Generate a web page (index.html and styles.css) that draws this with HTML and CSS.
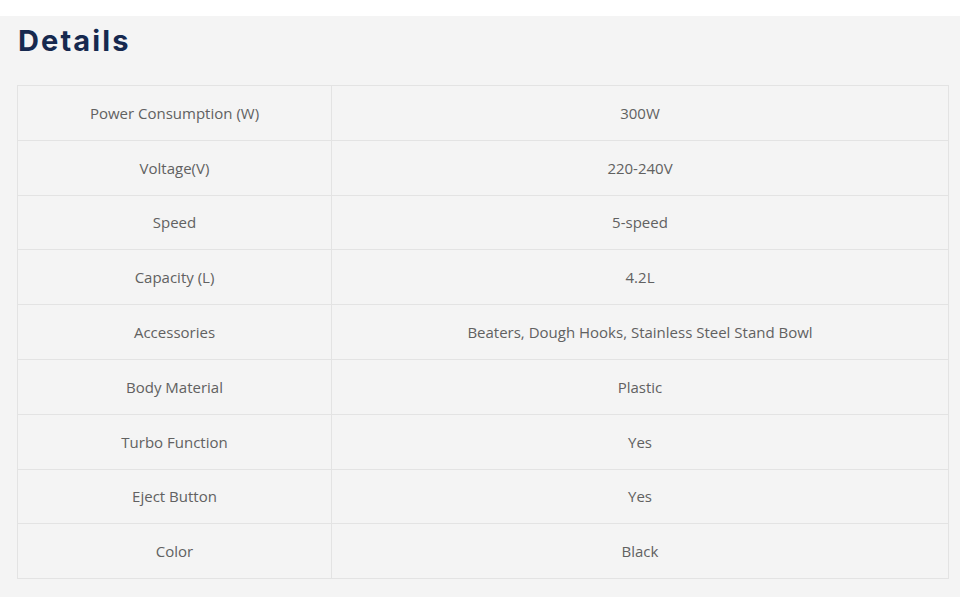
FILE: index.html
```html
<!DOCTYPE html>
<html>
<head>
<meta charset="utf-8">
<link rel="stylesheet" href="styles.css">
</head>
<body>
<div class="top"></div>
<section class="panel">
  <h2 class="title">Details</h2>
  <table class="specs">
    <tr><td>Power Consumption (W)</td><td>300W</td></tr>
    <tr><td>Voltage(V)</td><td>220-240V</td></tr>
    <tr><td>Speed</td><td>5-speed</td></tr>
    <tr><td>Capacity (L)</td><td>4.2L</td></tr>
    <tr><td>Accessories</td><td>Beaters, Dough Hooks, Stainless Steel Stand Bowl</td></tr>
    <tr><td>Body Material</td><td>Plastic</td></tr>
    <tr><td>Turbo Function</td><td>Yes</td></tr>
    <tr><td>Eject Button</td><td>Yes</td></tr>
    <tr><td>Color</td><td>Black</td></tr>
  </table>
</section>
</body>
</html>
```
FILE: styles.css
```css
html, body { margin: 0; padding: 0; background: #fff; }
body { font-family: "Open Sans", "Liberation Sans", sans-serif; }
.top { height: 16px; background: #fff; }
.panel {
  background: #f4f4f4;
  height: 581px;
  box-sizing: border-box;
  padding: 6px 11px 0 17px;
}
.title {
  margin: 0 0 0 1px;
  font-family: "Inter", "Open Sans", sans-serif;
  font-weight: 700;
  font-size: 29px;
  line-height: 38px;
  letter-spacing: 2.1px;
  color: #16294f;
  height: 63px;
}
.specs {
  width: 932px;
  border-collapse: collapse;
  table-layout: fixed;
}
.specs td {
  border: 1px solid #e3e3e3;
  height: 53.8px;
  padding: 0;
  text-align: center;
  font-size: 15px;
  color: #616161;
}
.specs td:first-child { width: 313px; }
```
